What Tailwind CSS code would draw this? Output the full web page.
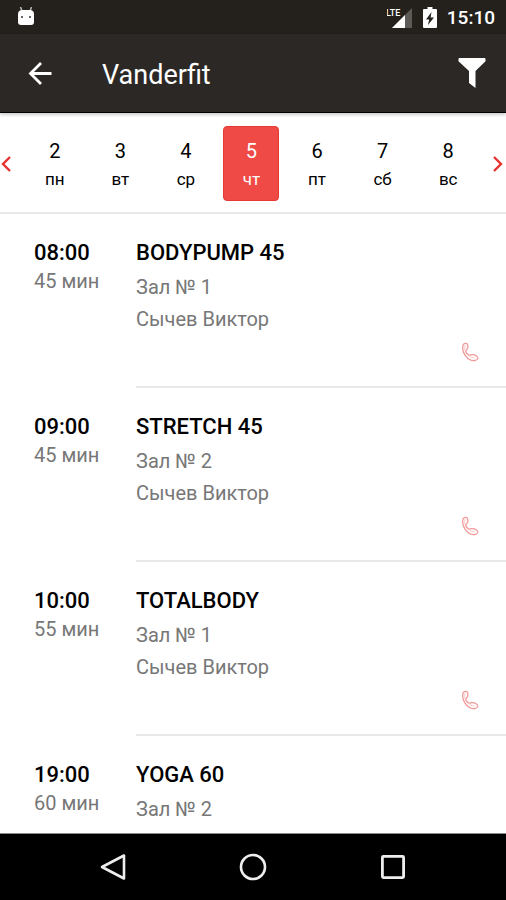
<!DOCTYPE html>
<html lang="ru">
<head>
<meta charset="utf-8">
<meta name="viewport" content="width=device-width, initial-scale=1">
<title>Vanderfit</title>
<script src="https://cdn.jsdelivr.net/npm/@tailwindcss/browser@4"></script>
</head>
<body class="flex h-screen flex-col overflow-hidden bg-white font-[Roboto,'Noto_Sans',sans-serif] text-black">
  <svg class="hidden" aria-hidden="true">
    <symbol id="phone" viewBox="0 0 18 20">
      <g fill="none" stroke="#f29a9a" stroke-width="1.300" stroke-linejoin="round">
        <path d="M4.600 9.400C5.400 8 7 6.600 6.900 4.500 6.800 2.600 6.200 1.200 4.800 1.300 2.800 1.400 1.600 3.200 1.600 5.400c0 5.200 3.600 10.900 8.300 12.800 2.400.9 5.700.3 6.700-1.200.7-1.200-.3-2.300-1.500-3.200-1.500-1.100-3.100-1.500-4.600-1.100-1.200.3-2 .8-2.900.2-1.400-.9-2.500-2.200-3-3.500Z"/>
        <path d="M4.600 9.400C3.500 8 3.400 5.500 4.300 3.200M7.600 12.900c1 1.900 3.200 3 5.800 2.900" stroke="#f8c4c4" stroke-width="1"/>
      </g>
    </symbol>
  </svg>

  <div class="flex h-[34px] shrink-0 items-center bg-[#24211d] pr-[11px] pl-[18px] text-white">
    <svg class="h-5 w-4" viewBox="0 0 16 20" fill="#fff" aria-hidden="true">
      <path d="M2.500 0 4 4M13.500 0 12 4" stroke="#bbb" stroke-width="1.500"/>
      <path d="M0 7c0-3 2-4 4-4h8c2 0 4 1 4 4v8a3 3 0 0 1-3 3H3a3 3 0 0 1-3-3Z"/>
      <circle cx="4" cy="10" r="1" fill="#333"/><circle cx="12" cy="10" r="1" fill="#333"/>
    </svg>
    <svg class="ml-auto h-[22px] w-[26px]" viewBox="0 0 26 22" aria-hidden="true">
      <path d="M25 2v20H5Z" fill="#5c5a57"/>
      <path d="M18 9v13H5Z" fill="#fff"/>
      <path d="M0 0h14v11H0Z" fill="#24211d"/>
      <text x="-1" y="10" fill="#fff" font-size="9" font-weight="500">LTE</text>
    </svg>
    <svg class="ml-[10px] h-[22px] w-[14px]" viewBox="0 0 14 22" aria-hidden="true">
      <path d="M4.500 1h5v2H13a1 1 0 0 1 1 1v17a1 1 0 0 1-1 1H1a1 1 0 0 1-1-1V4a1 1 0 0 1 1-1h3.500Z" fill="#fff"/>
      <path d="M8.500 6 3 13.500h3.200L5 19l6-7.500H7.600Z" fill="#24211d"/>
    </svg>
    <span class="ml-[10px] pt-[2px] text-[19px] leading-6 font-medium">15:10</span>
  </div>

  <header class="relative z-10 flex h-[79px] shrink-0 items-center border-b border-black bg-[#2c2825] pr-5 pl-7 text-white shadow-[0_2px_3px_rgba(0,0,0,0.2)]">
    <button type="button" aria-label="Назад">
      <svg class="size-6" viewBox="0 0 24 24" fill="none" stroke="#fff" stroke-width="2.800"><path d="M13 2 2.500 12.500 13 23M2.500 12.500h21"/></svg>
    </button>
    <h1 class="ml-[50px] pt-1 text-[27px] leading-8">Vanderfit</h1>
    <button type="button" class="ml-auto" aria-label="Фильтр">
      <svg class="h-8 w-7" viewBox="0 0 28 32" fill="#fff"><path d="M.500 2Q.500 1 1.500 1h25q1 0 1 1v2.200L17.500 14v17L11 26V14L.500 4.200Z"/></svg>
    </button>
  </header>

  <nav class="flex h-[101px] shrink-0 items-center border-b-2 border-[#e8e8e8] pt-[2px]" aria-label="Дни недели">
    <button type="button" class="w-[22px]" aria-label="Предыдущая неделя">
      <svg class="h-4 w-3" viewBox="0 0 12 16" fill="none" stroke="#e8302c" stroke-width="2.400"><path d="M10 1 3 8l7 7"/></svg>
    </button>
    <div class="grid flex-1 grid-cols-7 justify-items-center text-center">
      <button type="button" class="flex h-[75px] w-14 flex-col items-center rounded border border-transparent pt-[10px]"><span class="text-xl leading-7">2</span><span class="text-[17px] leading-7">пн</span></button>
      <button type="button" class="flex h-[75px] w-14 flex-col items-center rounded border border-transparent pt-[10px]"><span class="text-xl leading-7">3</span><span class="text-[17px] leading-7">вт</span></button>
      <button type="button" class="flex h-[75px] w-14 flex-col items-center rounded border border-transparent pt-[10px]"><span class="text-xl leading-7">4</span><span class="text-[17px] leading-7">ср</span></button>
      <button type="button" aria-pressed="true" class="flex h-[75px] w-14 flex-col items-center rounded border border-[#e53935] bg-[#ef4a45] pt-[10px] text-white"><span class="text-xl leading-7">5</span><span class="text-[17px] leading-7">чт</span></button>
      <button type="button" class="flex h-[75px] w-14 flex-col items-center rounded border border-transparent pt-[10px]"><span class="text-xl leading-7">6</span><span class="text-[17px] leading-7">пт</span></button>
      <button type="button" class="flex h-[75px] w-14 flex-col items-center rounded border border-transparent pt-[10px]"><span class="text-xl leading-7">7</span><span class="text-[17px] leading-7">сб</span></button>
      <button type="button" class="flex h-[75px] w-14 flex-col items-center rounded border border-transparent pt-[10px]"><span class="text-xl leading-7">8</span><span class="text-[17px] leading-7">вс</span></button>
    </div>
    <button type="button" class="flex w-[25px] justify-end pr-[2px]" aria-label="Следующая неделя">
      <svg class="h-4 w-3" viewBox="0 0 12 16" fill="none" stroke="#e8302c" stroke-width="2.400"><path d="m2 1 7 7-7 7"/></svg>
    </button>
  </nav>

  <main class="min-h-0 flex-1 overflow-hidden">
    <ul>
      <li class="flex pl-[34px]">
        <div class="w-[102px] shrink-0 pt-[25px]"><p class="text-[22px] leading-7 font-medium">08:00</p><p class="text-xl leading-7 text-[#777]">45 мин</p></div>
        <div class="flex-1 border-b-2 border-[#e8e8e8] pt-[25px] pb-6">
          <h2 class="text-[22px] leading-7 font-medium">BODYPUMP 45</h2>
          <p class="mt-1 text-xl leading-8 text-[#777]">Зал № 1</p>
          <p class="text-xl leading-8 text-[#777]">Сычев Виктор</p>
          <div class="mt-[7px] flex h-5 justify-end pr-[27px]"><button type="button" aria-label="Позвонить"><svg class="h-5 w-[18px]"><use href="#phone"/></svg></button></div>
        </div>
      </li>
      <li class="flex pl-[34px]">
        <div class="w-[102px] shrink-0 pt-[25px]"><p class="text-[22px] leading-7 font-medium">09:00</p><p class="text-xl leading-7 text-[#777]">45 мин</p></div>
        <div class="flex-1 border-b-2 border-[#e8e8e8] pt-[25px] pb-6">
          <h2 class="text-[22px] leading-7 font-medium">STRETCH 45</h2>
          <p class="mt-1 text-xl leading-8 text-[#777]">Зал № 2</p>
          <p class="text-xl leading-8 text-[#777]">Сычев Виктор</p>
          <div class="mt-[7px] flex h-5 justify-end pr-[27px]"><button type="button" aria-label="Позвонить"><svg class="h-5 w-[18px]"><use href="#phone"/></svg></button></div>
        </div>
      </li>
      <li class="flex pl-[34px]">
        <div class="w-[102px] shrink-0 pt-[25px]"><p class="text-[22px] leading-7 font-medium">10:00</p><p class="text-xl leading-7 text-[#777]">55 мин</p></div>
        <div class="flex-1 border-b-2 border-[#e8e8e8] pt-[25px] pb-6">
          <h2 class="text-[22px] leading-7 font-medium">TOTALBODY</h2>
          <p class="mt-1 text-xl leading-8 text-[#777]">Зал № 1</p>
          <p class="text-xl leading-8 text-[#777]">Сычев Виктор</p>
          <div class="mt-[7px] flex h-5 justify-end pr-[27px]"><button type="button" aria-label="Позвонить"><svg class="h-5 w-[18px]"><use href="#phone"/></svg></button></div>
        </div>
      </li>
      <li class="flex pl-[34px]">
        <div class="w-[102px] shrink-0 pt-[25px]"><p class="text-[22px] leading-7 font-medium">19:00</p><p class="text-xl leading-7 text-[#777]">60 мин</p></div>
        <div class="flex-1 pt-[25px]">
          <h2 class="text-[22px] leading-7 font-medium">YOGA 60</h2>
          <p class="mt-1 text-xl leading-8 text-[#777]">Зал № 2</p>
        </div>
      </li>
    </ul>
  </main>

  <footer class="flex h-[67px] shrink-0 items-center justify-center gap-28 border-t border-[#888] bg-black">
    <button type="button" aria-label="Назад (система)"><svg class="size-7" viewBox="0 0 28 28" fill="none" stroke="#eee" stroke-width="2.600" stroke-linejoin="round"><path d="M25 2.500v23L3 14Z"/></svg></button>
    <button type="button" aria-label="Домой"><svg class="size-7" viewBox="0 0 28 28" fill="none" stroke="#eee" stroke-width="2.600"><circle cx="14" cy="14" r="12"/></svg></button>
    <button type="button" aria-label="Недавние"><svg class="size-7" viewBox="0 0 28 28" fill="none" stroke="#eee" stroke-width="2.800"><rect x="3.400" y="3.400" width="21.200" height="21.200" rx="1"/></svg></button>
  </footer>
</body>
</html>
